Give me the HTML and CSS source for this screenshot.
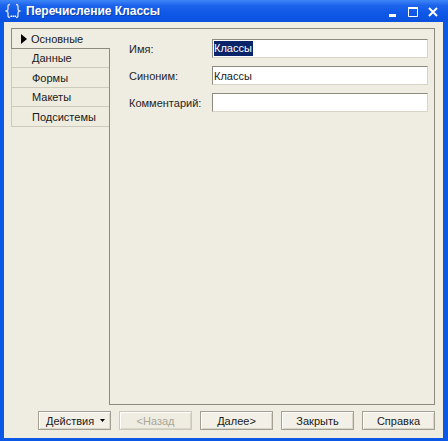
FILE: index.html
```html
<!DOCTYPE html>
<html lang="ru">
<head>
<meta charset="utf-8">
<title>Перечисление Классы</title>
<link rel="stylesheet" href="styles.css">
</head>
<body>
<div class="window">
  <div class="titlebar">
    <svg class="appicon" width="16" height="16" viewBox="0 0 16 16">
      <path d="M5 1.5 Q3 1.5 3 3.5 L3 6 Q3 7.5 1.5 8 Q3 8.5 3 10 L3 12.5 Q3 14.5 5 14.5" fill="none" stroke="#d8dce6" stroke-width="1.4"/>
      <path d="M11 1.5 Q13 1.5 13 3.5 L13 6 Q13 7.5 14.5 8 Q13 8.5 13 10 L13 12.5 Q13 14.5 11 14.5" fill="none" stroke="#d8dce6" stroke-width="1.4"/>
      <rect x="5.5" y="12.5" width="1.5" height="1.5" fill="#ffffff"/>
      <rect x="7.5" y="12.5" width="1.5" height="1.5" fill="#ffffff"/>
      <rect x="9.5" y="12.5" width="1.5" height="1.5" fill="#ffffff"/>
    </svg>
    <span class="title">Перечисление Классы</span>
    <div class="controls">
      <svg class="ctl" width="10" height="10" viewBox="0 0 10 10"><rect x="1" y="7" width="7" height="3" fill="#fff"/></svg>
      <svg class="ctl" width="10" height="10" viewBox="0 0 10 10"><path d="M0.5 1.5 H9.5 V9.5 H0.5 Z" fill="none" stroke="#fff" stroke-width="1"/><rect x="0" y="0" width="10" height="2" fill="#fff"/></svg>
      <svg class="ctl" width="10" height="10" viewBox="0 0 10 10"><path d="M1 1 L9 9 M9 1 L1 9" stroke="#fff" stroke-width="2"/></svg>
    </div>
  </div>
  <div class="client">
    <div class="main">
      <div class="tabs">
        <div class="tab active h21"><svg class="marker" width="6" height="10" viewBox="0 0 6 10"><path d="M0 0 L6 5 L0 10 Z" fill="#000"/></svg>Основные</div>
        <div class="tab h19">Данные</div>
        <div class="tab h20">Формы</div>
        <div class="tab h19">Макеты</div>
        <div class="tab h20">Подсистемы</div>
      </div>
      <div class="panel">
        <div class="form">
          <div class="label">Имя:</div>
          <div class="input"><span class="sel">Классы</span></div>
          <div class="label">Синоним:</div>
          <div class="input"><span class="val">Классы</span></div>
          <div class="label">Комментарий:</div>
          <div class="input"></div>
        </div>
      </div>
    </div>
    <div class="buttons">
      <div class="btn actions"><span>Действия</span><svg width="5" height="3" viewBox="0 0 5 3"><path d="M0 0 H5 L2.5 3 Z" fill="#000"/></svg></div>
      <div class="btn disabled">&lt;Назад</div>
      <div class="btn">Далее&gt;</div>
      <div class="btn">Закрыть</div>
      <div class="btn">Справка</div>
    </div>
  </div>
</div>
</body>
</html>
```

FILE: styles.css
```css
* { box-sizing: border-box; }
html, body { margin: 0; padding: 0; }
body {
  width: 448px;
  height: 441px;
  overflow: hidden;
  font-family: "Liberation Sans", Arial, sans-serif;
  font-size: 11px;
  color: #1a1a1a;
}
.window {
  width: 448px;
  height: 441px;
  display: flex;
  flex-direction: column;
  background: #0b58e6;
}
.titlebar {
  height: 22px;
  flex: none;
  display: flex;
  align-items: center;
  padding: 0 10px 0 5px;
  background: linear-gradient(#3d86f7 0%, #1c63ec 25%, #0f57e6 60%, #0b52de 100%);
}
.appicon { flex: none; margin-right: 5px; }
.title {
  color: #ffffff;
  font-weight: bold;
  font-size: 12px;
  text-shadow: 1px 1px 0 #0a3fa8;
  flex: 1;
}
.controls {
  display: flex;
  align-items: center;
  gap: 10px;
  margin-top: 2px;
}
.ctl { display: block; }
.client {
  flex: 1;
  margin: 0 5px 3px 4px;
  background: #efece1;
  padding: 6px 8px 8px 7px;
  display: flex;
  flex-direction: column;
  gap: 6px;
  border-top: 0;
}
.main {
  flex: 1;
  display: flex;
}
.tabs {
  width: 98px;
  flex: none;
  display: flex;
  flex-direction: column;
}
.tab {
  display: flex;
  align-items: center;
  padding-left: 20px;
  border-left: 1px solid #cdc9bb;
  border-bottom: 1px solid #cdc9bb;
  background: #eeebdf;
  color: #1a1a1a;
}
.tab.active {
  padding-left: 9px;
  border-top: 1px solid #8e8b7e;
  border-left: 1px solid #8e8b7e;
  border-bottom: 1px solid #8e8b7e;
  background: #efece1;
  margin-right: -1px;
  position: relative;
  z-index: 1;
}
.marker { margin-right: 4px; flex: none; }
.h21 { height: 21px; }
.h20 { height: 20px; }
.h19 { height: 19px; }
.panel {
  flex: 1;
  border: 1px solid #8e8b7e;
  padding: 10px 6px 0 19px;
}
.form {
  display: grid;
  grid-template-columns: 83px 1fr;
  grid-auto-rows: 19px;
  row-gap: 8px;
  align-items: center;
}
.label { color: #262626; }
.input {
  height: 19px;
  background: #ffffff;
  border: 1px solid;
  border-color: #8d8a7e #d9d5c6 #d9d5c6 #8d8a7e;
  padding: 0 0 0 1px;
  display: flex;
  align-items: center;
}
.sel {
  background: #0a246a;
  color: #ffffff;
  height: 15px;
  line-height: 15px;
  padding: 0 1px 0 0;
}
.val { padding-left: 0; }
.buttons {
  flex: none;
  display: flex;
  justify-content: flex-end;
  gap: 8px;
}
.btn {
  width: 73px;
  height: 19px;
  display: flex;
  align-items: center;
  justify-content: center;
  border: 1px solid #a3a093;
  background: #f3f0e7;
  box-shadow: inset 1px 1px 0 #ffffff, inset -1px -1px 0 #d9d5c7;
  color: #1a1a1a;
}
.btn.actions {
  justify-content: space-between;
  padding: 0 5px 0 7px;
}
.btn.actions svg { display: block; }
.btn.disabled {
  color: #aaa79a;
  border-color: #cbc8bc;
  background: #efece1;
}
```
